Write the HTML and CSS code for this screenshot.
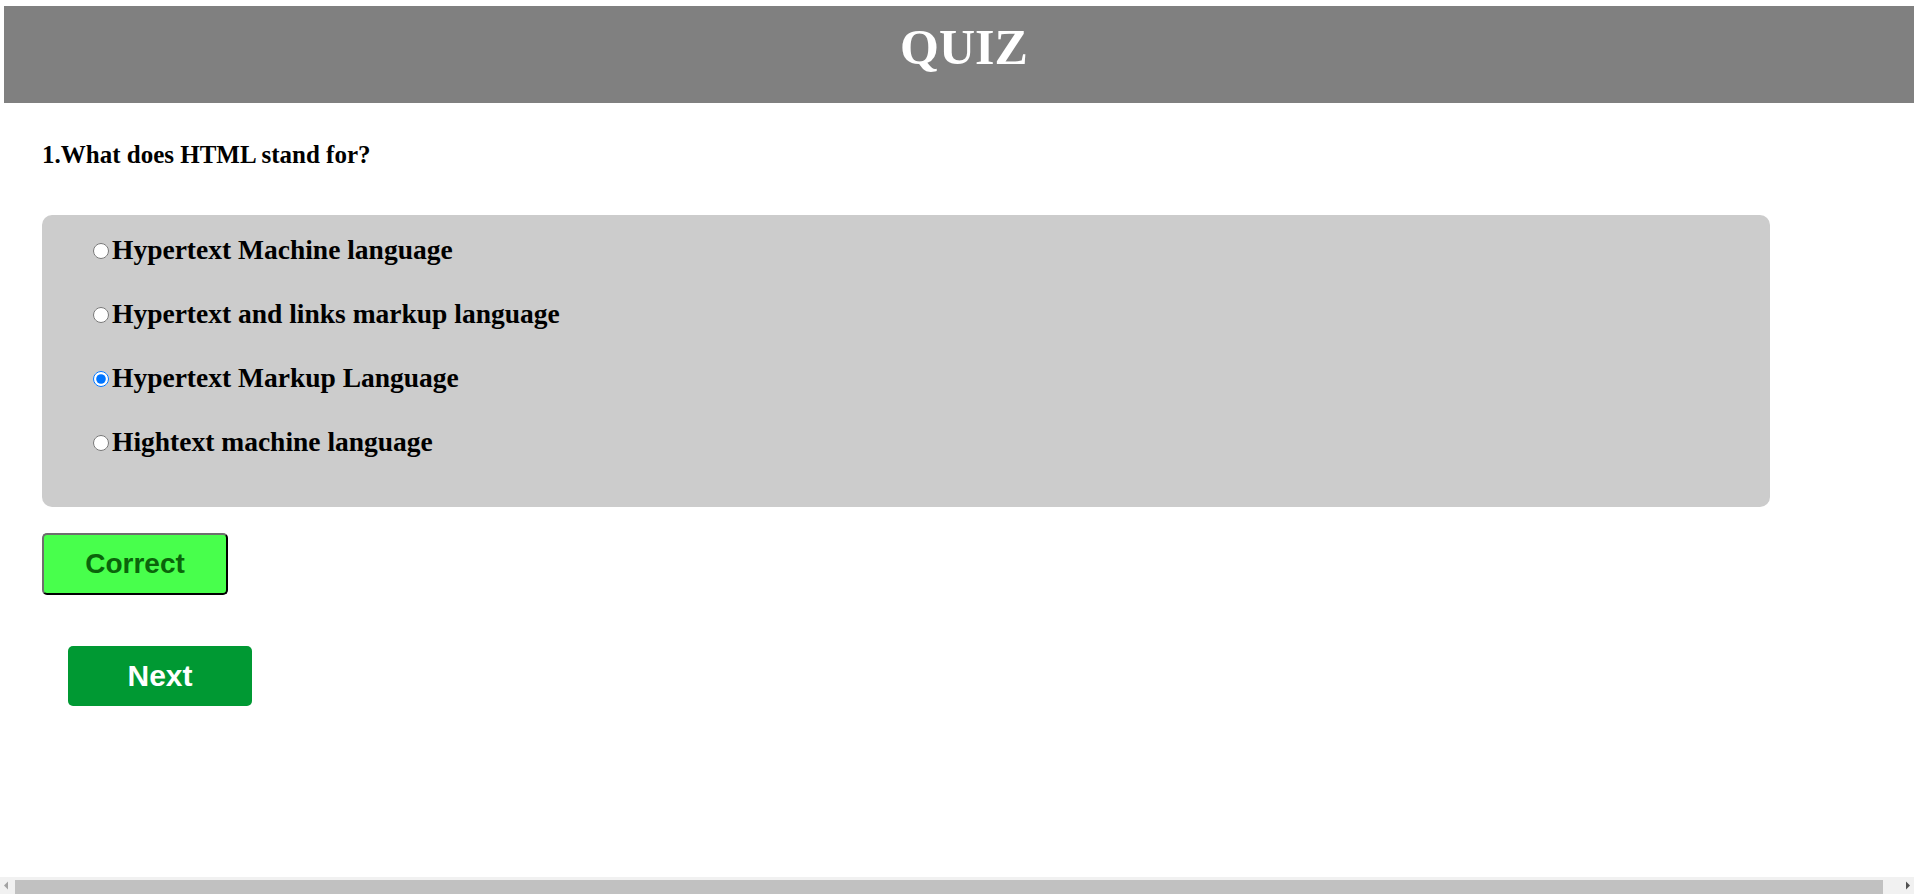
FILE: index.html
```html
<!DOCTYPE html>
<html lang="en">
<head>
<meta charset="utf-8">
<title>Quiz</title>
<link rel="stylesheet" href="styles.css">
</head>
<body>
<div class="page">
  <header class="topbar">
    <h1 class="title">QUIZ</h1>
  </header>
  <main class="quiz">
    <h3 class="question">1.What does HTML stand for?</h3>
    <div class="options">
      <label class="option"><input type="radio" name="q1" class="radio">Hypertext Machine language</label>
      <label class="option"><input type="radio" name="q1" class="radio">Hypertext and links markup language</label>
      <label class="option"><input type="radio" name="q1" class="radio" checked>Hypertext Markup Language</label>
      <label class="option"><input type="radio" name="q1" class="radio">Hightext machine language</label>
    </div>
    <button class="result">Correct</button>
    <div class="actions">
      <button class="next">Next</button>
    </div>
  </main>
</div>
<div class="hscroll" aria-hidden="true">
  <span class="hscroll-btn"><svg width="17" height="17" viewBox="0 0 17 17"><path d="M4 8.5 L8 4.5 L8 12.5 Z" fill="#a3a3a3"/></svg></span>
  <span class="hscroll-thumb"></span>
  <span class="hscroll-btn"><svg width="17" height="17" viewBox="0 0 17 17"><path d="M13 8.5 L9 4.5 L9 12.5 Z" fill="#505050"/></svg></span>
</div>
</body>
</html>
```
FILE: styles.css
```css
html, body {
  margin: 0;
  padding: 0;
}
body {
  background: #ffffff;
  font-family: "Liberation Serif", "Times New Roman", serif;
  color: #000;
}
.page {
  width: 1920px;
  margin: 6px 6px 0 4px;
}
.topbar {
  height: 97px;
  background: #808080;
  display: flex;
  justify-content: center;
  align-items: flex-start;
}
.title {
  margin: 0;
  padding-top: 12px;
  font-size: 50px;
  line-height: 58px;
  font-weight: bold;
  color: #ffffff;
}
.quiz {
  padding-left: 38px;
}
.question {
  margin: 0;
  padding-top: 38px;
  font-size: 25px;
  line-height: 28px;
  font-weight: bold;
}
.options {
  width: 1728px;
  box-sizing: border-box;
  margin-top: 46px;
  background: #cccccc;
  border-radius: 10px;
  padding: 19px 0 17px 46px;
  display: flex;
  flex-direction: column;
  gap: 32px;
}
.option {
  display: flex;
  align-items: center;
  font-size: 27.5px;
  line-height: 32px;
  font-weight: bold;
}
.option:last-child {
  margin-bottom: 32px;
}
.radio {
  width: 16px;
  height: 16px;
  margin: 2px 3px 0 5px;
}
.result {
  display: block;
  margin-top: 26px;
  width: 186px;
  height: 62px;
  background: #48ff4c;
  border: 2px outset #555;
  border-color: #6e6e6e #222 #222 #6e6e6e;
  border-radius: 5px;
  color: #0a640a;
  font-family: "Liberation Sans", Arial, sans-serif;
  font-size: 28px;
  font-weight: bold;
}
.actions {
  padding: 51px 0 0 26px;
}
.next {
  display: block;
  width: 184px;
  height: 60px;
  background: #009933;
  border: none;
  border-radius: 5px;
  color: #ffffff;
  font-family: "Liberation Sans", Arial, sans-serif;
  font-size: 30px;
  font-weight: bold;
}
.hscroll {
  position: fixed;
  left: 0;
  right: 0;
  bottom: 0;
  height: 17px;
  background: #f1f1f1;
  display: flex;
  align-items: stretch;
}
.hscroll-btn {
  width: 17px;
  flex: none;
  display: flex;
}
.hscroll-thumb {
  flex: 1;
  margin: 3px 14px 0 -2px;
  background: #c1c1c1;
}
```
